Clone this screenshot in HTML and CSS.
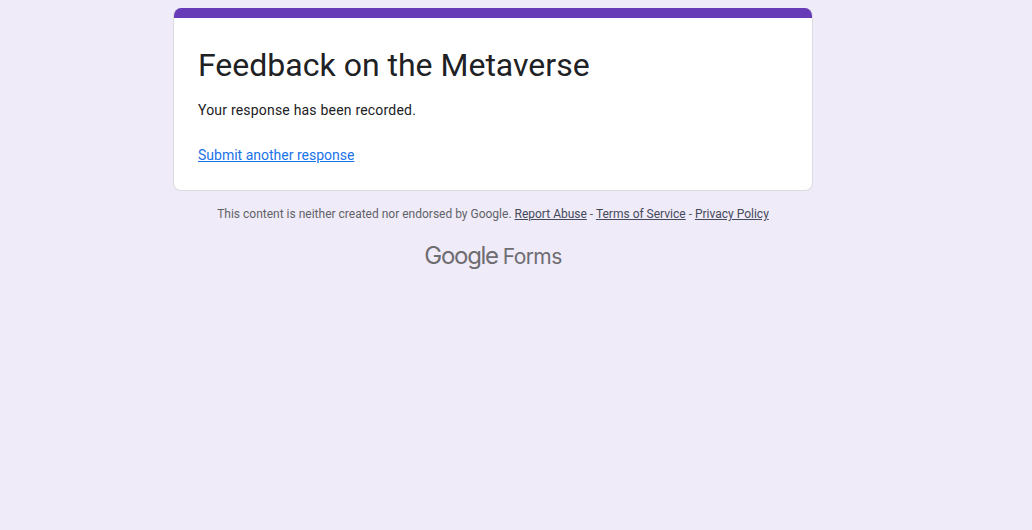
FILE: index.html
```html
<!DOCTYPE html>
<html lang="en">
<head>
  <meta charset="UTF-8" />
  <title>Feedback on the Metaverse</title>
  <link rel="stylesheet" href="styles.css">
</head>
<body>
  <div class="container">
    <div class="card">
      <div class="card-bar"></div>
      <div class="card-body">
        <h1>Feedback on the Metaverse</h1>
        <p class="message">Your response has been recorded.</p>
        <a class="another" href="#">Submit another response</a>
      </div>
    </div>
    <div class="disclaimer">
      This content is neither created nor endorsed by Google.
      <a href="#">Report Abuse</a> - <a href="#">Terms of Service</a> - <a href="#">Privacy Policy</a>
    </div>
    <div class="brand"><span class="brand-google">Google</span><span class="brand-forms">Forms</span></div>
  </div>
</body>
</html>
```

FILE: styles.css
```css
* {
  box-sizing: border-box;
}

body {
  margin: 0;
  min-height: 530px;
  background: #f0ebf8;
  font-family: Roboto, "Liberation Sans", sans-serif;
  color: #202124;
}

.container {
  width: 640px;
  margin-left: 173px;
  padding-top: 8px;
}

.card {
  background: #fff;
  border: 1px solid #dadce0;
  border-top: 0;
  border-radius: 8px;
  overflow: hidden;
}

.card-bar {
  height: 10px;
  margin: 0 -1px;
  background: #673ab7;
}

.card-body {
  padding: 23px 24px 25px;
}

h1 {
  margin: 0;
  font-size: 32px;
  font-weight: 400;
  line-height: 48px;
}

.message {
  margin: 11px 0 0;
  font-size: 14px;
  letter-spacing: 0.2px;
  line-height: 20px;
}

.another {
  display: block;
  margin-top: 25px;
  font-size: 14px;
  line-height: 20px;
  color: #1a73e8;
}

.disclaimer {
  margin-top: 15px;
  font-size: 12px;
  line-height: 16px;
  text-align: center;
  color: #5f6368;
}

.disclaimer a {
  color: #444a5a;
}

.brand {
  display: flex;
  justify-content: center;
  align-items: baseline;
  gap: 5px;
  margin-top: 19px;
  color: #6d6d72;
  font-family: Inter, sans-serif;
  line-height: 30px;
}

.brand-google {
  font-size: 24px;
  letter-spacing: -1.3px;
}

.brand-forms {
  font-size: 21px;
  letter-spacing: -0.6px;
}
```
